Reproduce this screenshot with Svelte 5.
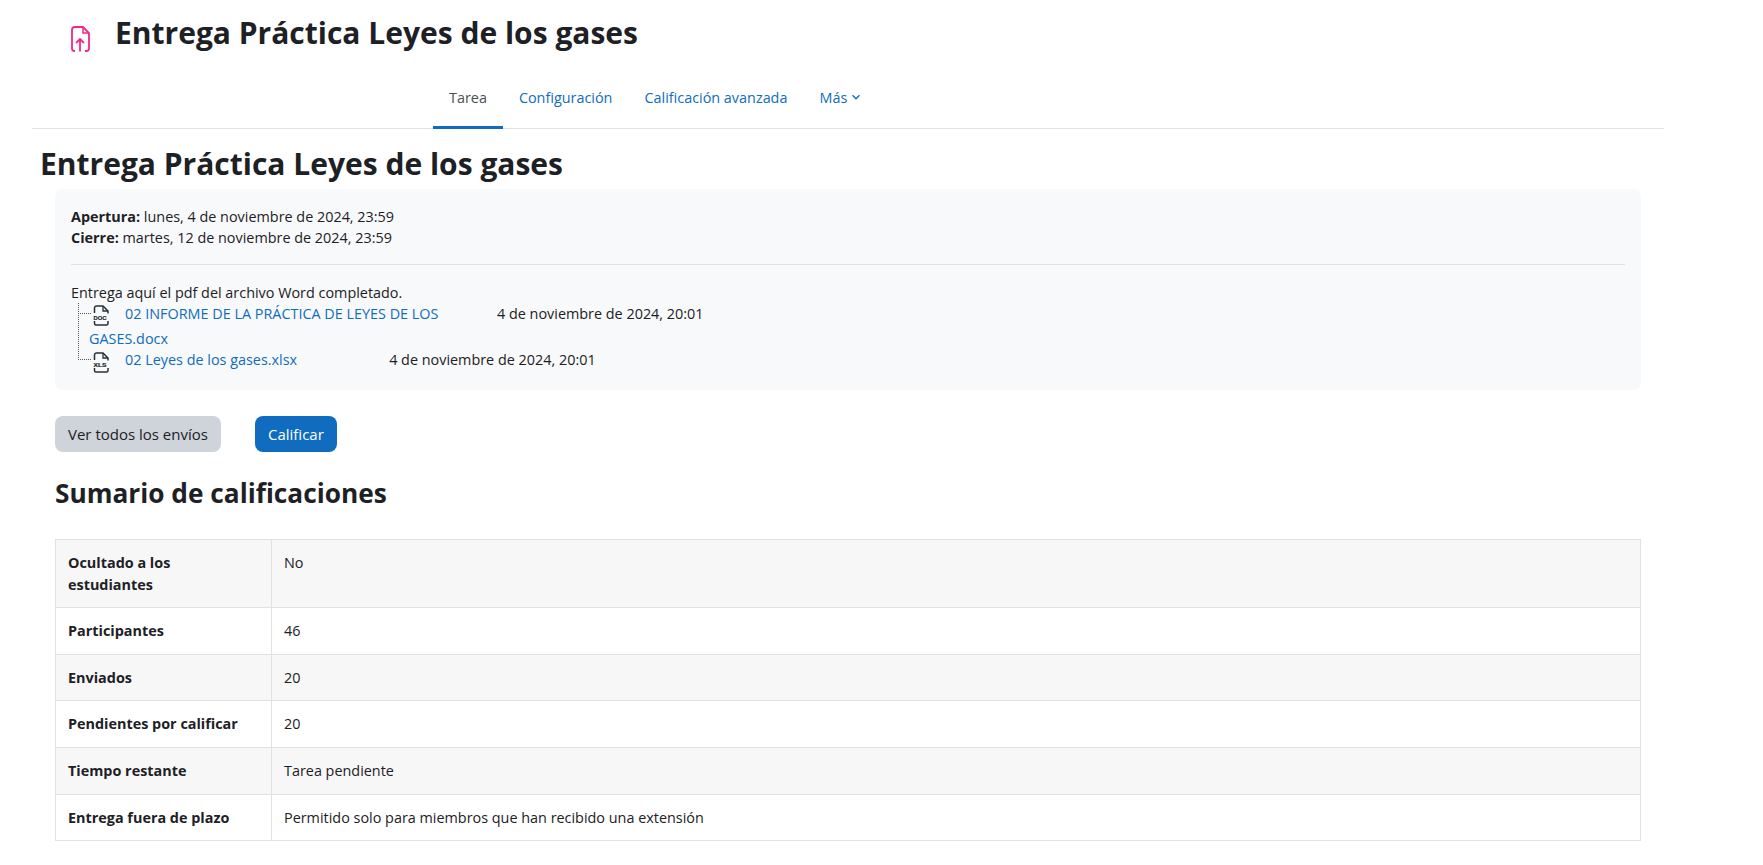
<script>
  const rows = [
    ['Ocultado a los estudiantes', 'No'],
    ['Participantes', '46'],
    ['Enviados', '20'],
    ['Pendientes por calificar', '20'],
    ['Tiempo restante', 'Tarea pendiente'],
    ['Entrega fuera de plazo', 'Permitido solo para miembros que han recibido una extensión']
  ];
</script>

{#snippet fileIcon(label)}
  <svg class="ficon" viewBox="0 0 18 21" width="18" height="21" aria-hidden="true">
    <path d="M2.500 8V3a2 2 0 0 1 2-2h6.500l5 5v2.500M2.500 16v2.500a1.500 1.500 0 0 0 1.500 1.500h10.500a1.500 1.500 0 0 0 1.500-1.500V16" fill="none" stroke="#2b2f33" stroke-width="1.500"/>
    <path d="M11 1v5h5" fill="none" stroke="#2b2f33" stroke-width="1.300"/>
    <text x="8" y="14.800" text-anchor="middle" textLength="13" lengthAdjust="spacingAndGlyphs">{label}</text>
  </svg>
{/snippet}

<div class="page">
  <header class="head">
    <svg class="modicon" viewBox="0 0 20 26" width="20" height="26" aria-hidden="true">
      <path d="M2 20V4a3 3 0 0 1 3-3h8l6 6v13M19 20v2.500a2.500 2.500 0 0 1-2.500 2.500H15M5 25H4.500A2.500 2.500 0 0 1 2 22.500V20" fill="none" stroke="#f6258b" stroke-width="1.800"/>
      <path d="M13 1v6h6" fill="none" stroke="#f6258b" stroke-width="1.500"/>
      <path d="M10 25.500V13M6 17l4-4 4 4" fill="none" stroke="#f6258b" stroke-width="1.800"/>
    </svg>
    <h1>Entrega Práctica Leyes de los gases</h1>
  </header>

  <nav class="tabs">
    <a class="tab active" href="#t">Tarea</a>
    <a class="tab" href="#c">Configuración</a>
    <a class="tab" href="#a">Calificación avanzada</a>
    <a class="tab" href="#m">Más
      <svg class="chev" viewBox="0 0 10 10" width="10" height="10" aria-hidden="true"><path d="M1.500 3.200 5 6.800l3.500-3.600" fill="none" stroke="#0f6cbf" stroke-width="1.300"/></svg>
    </a>
  </nav>

  <h2 class="title">Entrega Práctica Leyes de los gases</h2>

  <main class="content">
    <section class="card">
      <div class="dates">
        <div><strong>Apertura:</strong> lunes, 4 de noviembre de 2024, 23:59</div>
        <div><strong>Cierre:</strong> martes, 12 de noviembre de 2024, 23:59</div>
      </div>
      <hr />
      <p class="intro">Entrega aquí el pdf del archivo Word completado.</p>
      <div class="tree">
        <div class="file one">
          <div class="name">
            {@render fileIcon('DOC')}<a href="#d">02 INFORME DE LA PRÁCTICA DE LEYES DE LOS GASES.docx</a>
          </div>
          <span class="date">4 de noviembre de 2024, 20:01</span>
        </div>
        <div class="file two">
          <div class="name">
            {@render fileIcon('XLS')}<a href="#x">02 Leyes de los gases.xlsx</a>
          </div>
          <span class="date">4 de noviembre de 2024, 20:01</span>
        </div>
      </div>
    </section>

    <div class="buttons">
      <button class="btn grey">Ver todos los envíos</button>
      <button class="btn blue">Calificar</button>
    </div>

    <h3>Sumario de calificaciones</h3>

    <table>
      <tbody>
        {#each rows as r}
          <tr><th>{r[0]}</th><td>{r[1]}</td></tr>
        {/each}
      </tbody>
    </table>
  </main>
</div>

<style>
  :global(body) {
    margin: 0;
    background: #fff;
    color: #1d2125;
    font-family: "Open Sans", "Noto Sans", sans-serif;
    font-size: 14.400px;
    line-height: 21px;
  }
  .page {
    width: 1632px;
    margin-left: 32px;
  }
  .head {
    display: flex;
    align-items: flex-start;
    padding-left: 38px;
    height: 76px;
  }
  .modicon {
    margin-top: 26px;
    margin-right: 25px;
  }
  h1 {
    margin: 12px 0 0;
    font-size: 30px;
    line-height: 42px;
    font-weight: 700;
  }
  .tabs {
    display: flex;
    height: 52px;
    padding-left: 401px;
    border-bottom: 1px solid #dee2e6;
    box-sizing: content-box;
  }
  .tab {
    display: flex;
    align-items: center;
    gap: 4px;
    padding: 0 16px 8px;
    color: #0f6cbf;
    text-decoration: none;
    border-bottom: 3px solid transparent;
    box-sizing: border-box;
    height: 53px;
  }
  .tab.active {
    color: #495057;
    border-bottom-color: #0f6cbf;
  }
  .title {
    margin: 0 0 0 8px;
    padding-top: 18px;
    font-size: 30px;
    line-height: 34px;
    font-weight: 700;
    height: 42px;
  }
  .content {
    padding-left: 23px;
    width: 1586px;
  }
  .card {
    background: #f8f9fa;
    border-radius: 8px;
    padding: 17px 16px 18px;
    height: 201px;
    box-sizing: border-box;
  }
  hr {
    border: 0;
    border-top: 1px solid #dee2e6;
    margin: 16px 0 17px;
  }
  .intro { margin: 0; }
  .tree {
    position: relative;
  }
  .tree::before {
    content: "";
    position: absolute;
    left: 7px;
    top: 0;
    height: 57px;
    border-left: 1px dotted #555;
  }
  .file {
    display: flex;
    align-items: flex-start;
    position: relative;
    padding-left: 18px;
  }
  .file::before {
    content: "";
    position: absolute;
    left: 7px;
    width: 13px;
    border-top: 1px dotted #555;
    top: 10px;
  }
  .one .name { width: 360px; }
  .one .date { margin-left: 48px; }
  .two .date { margin-left: 92px; }
  .name a {
    color: #0f6cbf;
    text-decoration: none;
  }
  .ficon {
    vertical-align: top;
    margin: 2px 15px 2px 3px;
  }
  .two .ficon { margin-top: 3px; }
  .ficon text {
    font-family: "Liberation Sans", sans-serif;
    font-size: 6px;
    font-weight: 700;
    fill: #1d2125;
    stroke: #1d2125;
    stroke-width: 0.200px;
  }
  .buttons {
    display: flex;
    gap: 34px;
    margin-top: 26px;
  }
  .btn {
    font: inherit;
    font-size: 15px;
    height: 36px;
    padding: 0 13px;
    border: 0;
    border-radius: 8px;
  }
  .grey { background: #ced4da; color: #1d2125; }
  .blue { background: #0f6cbf; color: #fff; }
  h3 {
    margin: 24px 0 0;
    font-size: 26.250px;
    line-height: 34px;
    font-weight: 700;
  }
  table {
    margin-top: 29px;
    width: 100%;
    border-collapse: collapse;
    table-layout: fixed;
  }
  th, td {
    border: 1px solid #dee2e6;
    padding: 12px;
    text-align: left;
    vertical-align: top;
    line-height: 21.600px;
  }
  th { padding-right: 24px; box-sizing: content-box; width: 179px; font-weight: 700; }
  tr:nth-child(odd) { background: #f7f7f7; }
</style>
